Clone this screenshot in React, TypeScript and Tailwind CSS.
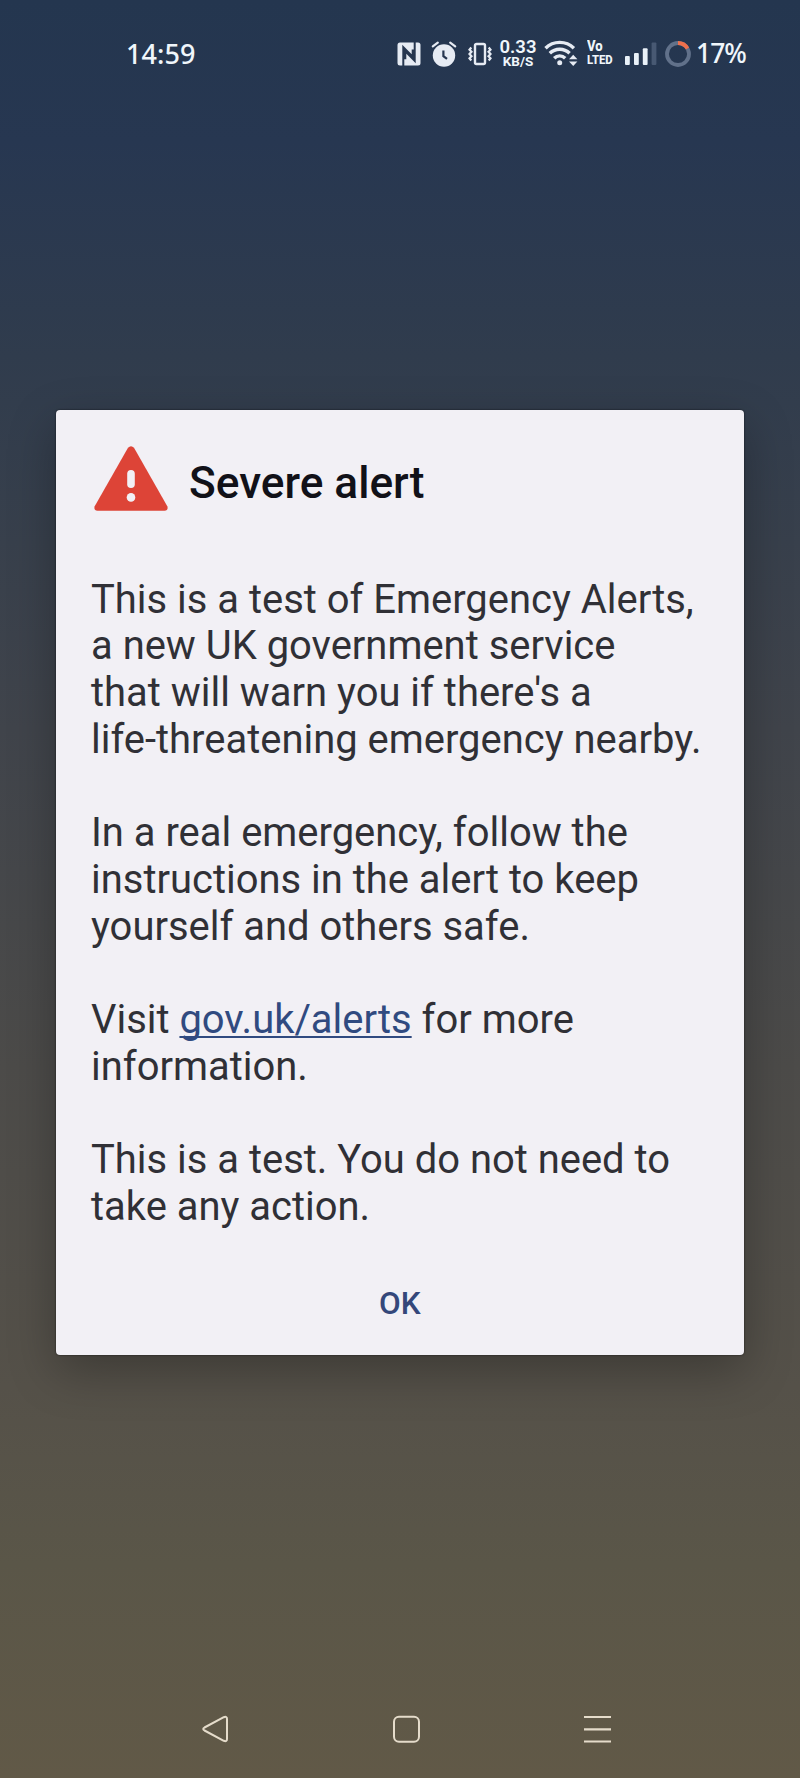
import React from "react";

function NfcIcon() {
  return (
    <svg width="24" height="24" viewBox="0 0 24 24" className="shrink-0">
      <rect x="0.5" y="0.5" width="23" height="23" rx="2.5" fill="#e6ebf3" />
      <path d="M6.3 24V5.2l9.4 9.6V7.5M17.7 0v18.8L8.3 9.2v8" fill="none" stroke="#26364f" strokeWidth="2" />
    </svg>
  );
}

function AlarmIcon() {
  return (
    <svg width="26" height="26" viewBox="0 0 26 26" className="shrink-0">
      <circle cx="13" cy="14.5" r="11.2" fill="#e6ebf3" />
      <path d="M1.8 5.4 6.8 1.6M24.2 5.4 19.2 1.6" stroke="#e6ebf3" strokeWidth="2.2" strokeLinecap="round" />
      <path d="M12.4 9.5v5.6l3.6 2.8" fill="none" stroke="#26364f" strokeWidth="2.2" />
    </svg>
  );
}

function VibrateIcon() {
  return (
    <svg width="24" height="24" viewBox="0 0 24 24" className="shrink-0">
      <rect x="7" y="2" width="10" height="20" rx="1.5" fill="none" stroke="#e6ebf3" strokeWidth="2.4" />
      <path d="M3.3 5.5 1.5 7.7l2 2.1-2 2.2 2 2.2-2 2.1 1.8 2.2M20.7 5.5l1.8 2.2-2 2.1 2 2.2-2 2.2 2 2.1-1.8 2.2" fill="none" stroke="#e6ebf3" strokeWidth="2.2" />
    </svg>
  );
}

function WifiIcon() {
  return (
    <svg width="34" height="27" viewBox="0 0 34 27" className="shrink-0">
      <g fill="none" stroke="#e6ebf3" strokeWidth="3.4">
        <path d="M1.5 8.2a20.3 20.3 0 0 1 28.4 0" />
        <path d="M5.8 13.3a14 14 0 0 1 19.8 0" />
        <path d="M10.2 18.2a7.7 7.7 0 0 1 11 0" />
      </g>
      <circle cx="15.7" cy="22.8" r="2.5" fill="#e6ebf3" />
      <path d="M25 19.2h8.4L29.2 14.8zM25 21.6h8.4L29.2 26z" fill="#e6ebf3" />
    </svg>
  );
}

function SignalIcon() {
  return (
    <svg width="32" height="24" viewBox="0 0 32 24" className="shrink-0">
      <g fill="#e9f1f8">
        <rect x="0" y="14" width="4.8" height="9" rx="1" />
        <rect x="9" y="11" width="4.8" height="12" rx="1" />
        <rect x="17.8" y="6.3" width="4.8" height="16.7" rx="1" />
      </g>
      <rect x="26.6" y="0.5" width="4.8" height="22.5" rx="1" fill="#485973" />
    </svg>
  );
}

function BatteryIcon() {
  return (
    <svg width="28" height="28" viewBox="0 0 28 28" className="shrink-0">
      <circle cx="14" cy="14" r="11" fill="none" stroke="#61718a" strokeWidth="3.8" />
      <path d="M14 3a11 11 0 0 1 9.5 5.5" fill="none" stroke="#ef704c" strokeWidth="3.8" />
    </svg>
  );
}

function WarningIcon() {
  return (
    <svg width="74" height="65" viewBox="0 0 74 65" className="shrink-0">
      <path d="M34 1.8Q37 -1.2 40 1.8L73.3 60.2Q74.6 64.6 70.5 64.7H3.5Q-.6 64.6.7 60.2Z" fill="#dd4437" />
      <rect x="33.2" y="24" width="7.6" height="18" rx="3.8" fill="#f2f0f5" />
      <circle cx="37" cy="51.4" r="4.3" fill="#f2f0f5" />
    </svg>
  );
}

function StatusBar() {
  return (
    <header className="flex h-[107px] items-center pl-[126px] font-['Noto_Sans',sans-serif] font-medium text-[#f0f6fb]">
      <time className="w-[271px] text-[27px] leading-none tracking-[0.1px]">14:59</time>
      <div className="flex shrink-0 items-center">
        <NfcIcon />
        <span className="ml-[10px] flex"><AlarmIcon /></span>
        <span className="ml-[10.5px] flex"><VibrateIcon /></span>
        <div className="ml-[8.5px] flex w-[36px] flex-col items-center pt-[1px] text-center font-['Roboto',sans-serif]">
          <span className="text-[18.5px] leading-[14px] font-semibold">0.33</span>
          <span className="text-[13.5px] leading-[14px] font-bold">KB/S</span>
        </div>
        <span className="ml-[7.5px] flex"><WifiIcon /></span>
        <div className="ml-[9px] flex w-[28px] flex-col items-start font-['Roboto',sans-serif] font-extrabold">
          <span className="origin-left scale-x-[0.9] text-[14.5px] leading-[12px]">Vo</span>
          <span className="origin-left scale-x-[0.87] text-[13px] leading-[13px]">LTED</span>
        </div>
        <span className="ml-[10.5px] flex"><SignalIcon /></span>
        <span className="ml-[7px] flex"><BatteryIcon /></span>
        <span className="ml-[4px] text-[26.5px] leading-none tracking-[-1px]">17%</span>
      </div>
    </header>
  );
}

function NavigationBar() {
  return (
    <nav className="mt-auto flex h-[99px] items-center pl-[201px]">
      <button aria-label="Back" className="mr-[163px] h-[28px] w-[28px]">
        <svg width="28" height="28" viewBox="0 0 28 28" fill="none" stroke="#e5dccb" strokeWidth="2" strokeLinejoin="round">
          <path d="M3.5 12.5 22.8 2.2Q26 1 26 4V24Q26 27 22.8 25.8L3.5 15.5Q1 14 3.5 12.5Z" />
        </svg>
      </button>
      <button aria-label="Home" className="mr-[163px] h-[28px] w-[28px]">
        <svg width="28" height="28" viewBox="0 0 28 28" fill="none" stroke="#e5dccb" strokeWidth="2">
          <rect x="2" y="1.8" width="25" height="25" rx="5" />
        </svg>
      </button>
      <button aria-label="Recent apps" className="h-[28px] w-[28px]">
        <svg width="28" height="28" viewBox="0 0 28 28" fill="none" stroke="#e5dccb" strokeWidth="2.2">
          <path d="M1 2h27M1 14.3h27M1 26.5h27" />
        </svg>
      </button>
    </nav>
  );
}

export default function App() {
  return (
    <div className="flex h-[1778px] w-[800px] flex-col overflow-hidden bg-[linear-gradient(180deg,#24364f_0%,#273751_8%,#303c4d_20%,#40444b_41%,#4c4b49_60%,#555149_78%,#5a5648_88%,#615947_100%)] font-['Roboto',sans-serif]">
      <StatusBar />
      <main className="mr-[56px] ml-[55.5px] mt-[302.5px] flex h-[945px] shrink-0 flex-col rounded-[4px] bg-[#f2f0f5] px-[35.5px] shadow-[0_16px_48px_rgba(0,0,0,0.28),0_0_2px_rgba(0,0,0,0.7)]">
        <div className="mt-[36px] flex h-[65px] items-center pl-[3px]">
          <WarningIcon />
          <h1 className="ml-[21px] pt-[9px] text-[44.2px] leading-[52px] font-medium text-[#111118]">Severe alert</h1>
        </div>
        <div className="mt-[66px] text-[39.95px] leading-[46.72px] whitespace-nowrap text-[#303036]">
          <p>This is a test of Emergency Alerts,<br />a new UK government service<br />that will warn you if there's a<br />life-threatening emergency nearby.</p>
          <p className="mt-[46.72px]">In a real emergency, follow the<br />instructions in the alert to keep<br />yourself and others safe.</p>
          <p className="mt-[46.72px]">Visit <a href="#" className="text-[#304a80] underline decoration-[2px] underline-offset-[3px] [text-decoration-skip-ink:none]">gov.uk/alerts</a> for more<br />information.</p>
          <p className="mt-[46.72px]">This is a test. You do not need to<br />take any action.</p>
        </div>
        <button className="mx-auto mt-[54px] text-[31.5px] leading-[38px] font-medium text-[#34477a]">OK</button>
      </main>
      <NavigationBar />
    </div>
  );
}
